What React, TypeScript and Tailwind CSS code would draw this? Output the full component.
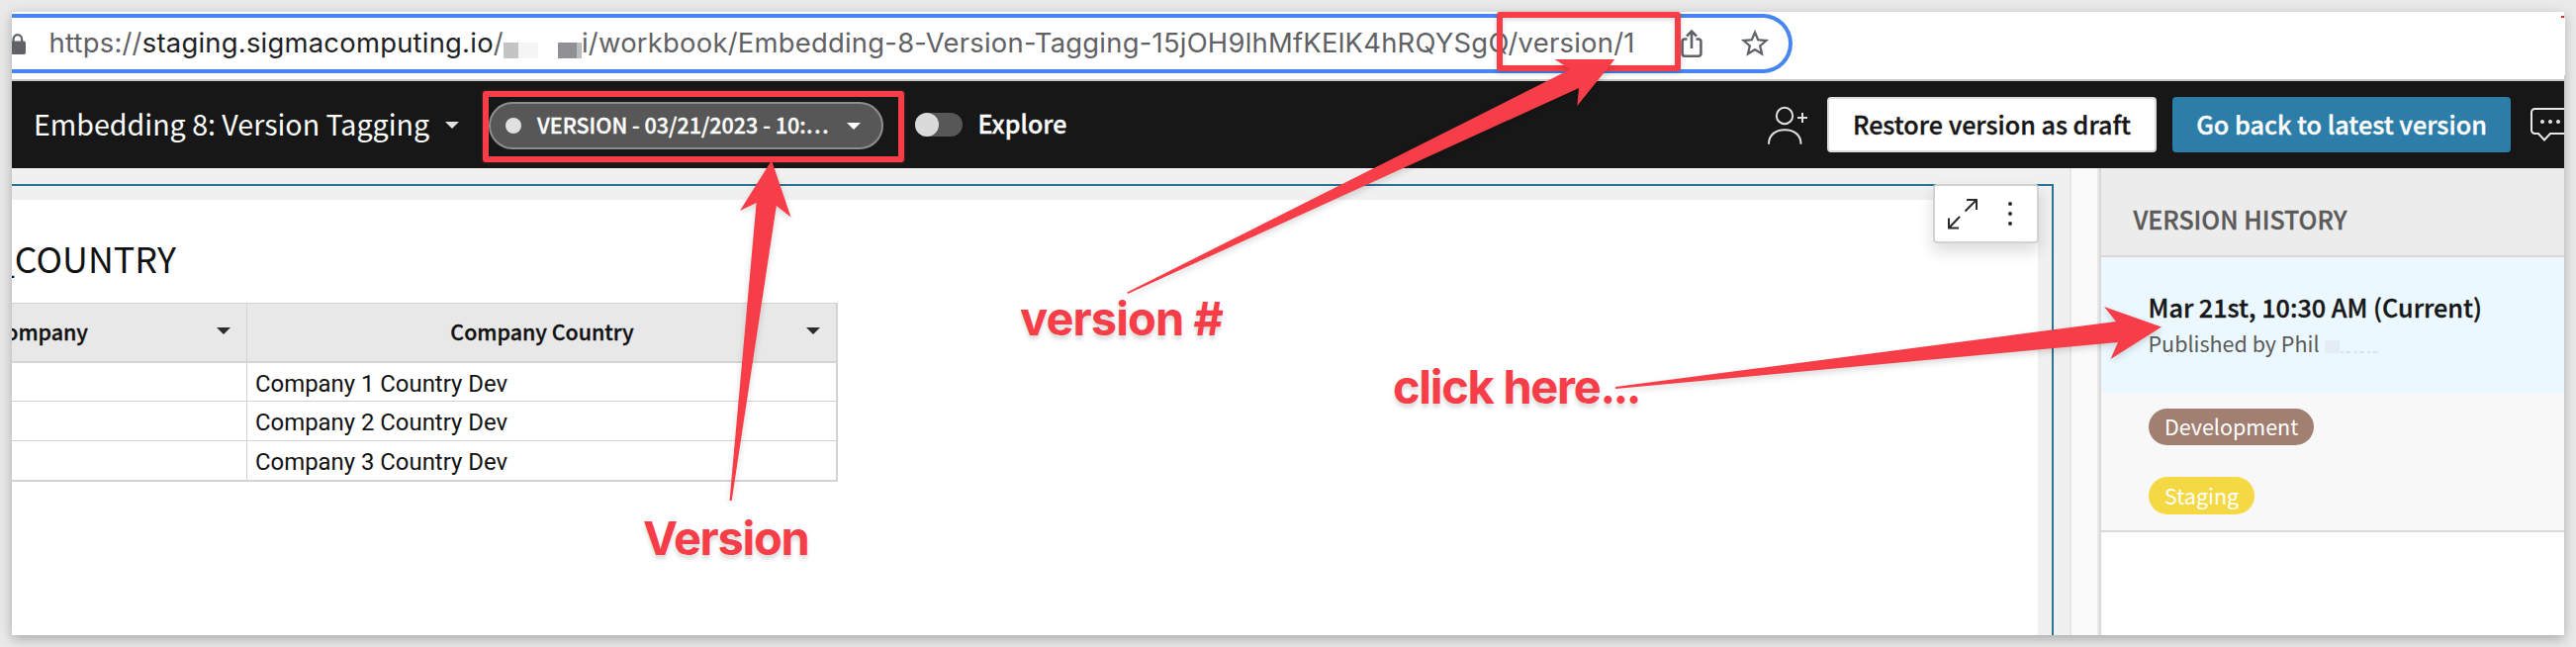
import type { ReactNode } from "react";

const sans = "font-['Noto_Sans_CJK_SC',sans-serif]";
const semibold = "font-medium [-webkit-text-stroke:0.35px_currentColor]";

function Caret({ className }: { className: string }) {
  return (
    <svg viewBox="0 0 14 7" className={`h-[7px] w-[14px] shrink-0 ${className}`} fill="currentColor">
      <path d="M0 0h14L7 7z" />
    </svg>
  );
}

function AddressBar() {
  return (
    <div className="h-[70px] border-b-2 border-[#c9cacb] bg-white pt-[2px]">
      <div className="flex h-[60px] w-[1800px] items-center rounded-r-[30px] border-4 border-l-0 border-[#4586f0] text-[27.4px] leading-none tracking-[0.24px] whitespace-nowrap text-[#5f6165] font-['Inter',sans-serif]">
        <svg viewBox="0 0 14 21" className="h-[21px] w-[14px] shrink-0">
          <path d="M1.5 9V6a4.3 4.8 0 0 1 8.6 0v3" fill="none" stroke="#5f6368" strokeWidth="2.2" />
          <path d="M0 7.5h12a2 2 0 0 1 2 2V19a2 2 0 0 1-2 2H0z" fill="#5f6368" />
        </svg>
        <div className="ml-[23.5px] w-[461px] shrink-0">
          https://<span className="text-[#202124]">staging.sigmacomputing.io</span>/
        </div>
        <div className="mt-[14px] flex h-4 w-[77.5px] shrink-0">
          <i className="ml-[-2px] w-[16.5px] bg-[#c4c4c4]" />
          <i className="w-[20px] bg-[#f5f5f5]" />
          <i className="ml-[20px] w-[20px] bg-[#8e9093]" />
          <i className="w-[5px] bg-[#bbbcbd]" />
        </div>
        <div className="w-[1111px] shrink-0">
          i/workbook/Embedding-8-Version-Tagging-15jOH9lhMfKElK4hRQYSgQ/version/1
        </div>
        <svg viewBox="0 0 22 30" className="h-[30px] w-[22px] shrink-0" fill="none" stroke="#5f6368" strokeWidth="2.6">
          <path d="M6.5 10.5H4a2.4 2.4 0 0 0-2.4 2.4v12.4A2.4 2.4 0 0 0 4 27.7h14a2.4 2.4 0 0 0 2.4-2.4V12.9a2.4 2.4 0 0 0-2.4-2.4h-2.5" />
          <path d="M11 20V3M6 7.7l5-5 5 5" />
        </svg>
        <svg viewBox="0 0 24 24" className="ml-[35.5px] size-[34px] shrink-0" fill="#5f6368">
          <path d="M22 9.24l-7.19-.62L12 2 9.19 8.63 2 9.24l5.46 4.73L5.82 21 12 17.27 18.18 21l-1.63-7.03L22 9.24zM12 15.4l-3.76 2.27 1-4.28-3.32-2.88 4.38-.38L12 6.1l1.71 4.04 4.38.38-3.32 2.88 1 4.28L12 15.4z" />
        </svg>
      </div>
    </div>
  );
}

function Header() {
  return (
    <header className="flex h-[88px] items-center bg-[#171717] whitespace-nowrap text-white">
      <div className="ml-[22px] w-[416px] shrink-0 pb-[3px] text-[28.6px] leading-[40px]">Embedding 8: Version Tagging</div>
      <Caret className="text-[#e0e0e0]" />
      <div className="mt-[2px] ml-[30px] flex h-[48px] w-[398.5px] shrink-0 items-center rounded-full border-2 border-[#8e8e8e] bg-[#575757]">
        <span className="ml-[15px] size-4 shrink-0 rounded-full bg-[#e0e0e0]" />
        <span className={`ml-4 w-[313px] shrink-0 pb-[3px] text-[21.5px] leading-[30px] ${semibold}`}>VERSION - 03/21/2023 - 10:…</span>
        <Caret className="text-white" />
      </div>
      <div className="ml-[32.5px] flex h-6 w-12 shrink-0 rounded-full bg-[#575757]">
        <span className="size-6 rounded-full bg-[#dadada]" />
      </div>
      <div className={`ml-[15.5px] shrink-0 pb-[4px] text-[25px] leading-[36px] ${semibold}`}>Explore</div>
      <div className="flex flex-1 items-center justify-end">
        <svg viewBox="0 0 42 40" className="mr-[19px] h-[40px] w-[42px] shrink-0" fill="none" stroke="#e0e0e0" strokeWidth="2">
          <circle cx="18" cy="11" r="8.2" />
          <path d="M2 39.700C2 30 9 25.300 18.200 25.300S34.500 30 34.500 39.700" />
          <path d="M36 8v10M31 13h10" />
        </svg>
        <button className={`h-[56px] w-[333px] rounded-[4px] border-2 border-[#dcdcdc] bg-white pb-[2px] text-[25.1px] leading-[36px] text-[#171717] ${semibold}`}>
          Restore version as draft
        </button>
        <button className={`ml-4 h-[56px] w-[342px] rounded-[4px] bg-[#2d7da9] pb-[2px] text-[25.2px] leading-[36px] text-white ${semibold}`}>
          Go back to latest version
        </button>
        <svg viewBox="0 0 34 36" className="ml-[20px] h-[36px] w-[34px] shrink-0" fill="none" stroke="#e8e8e8" strokeWidth="2">
          <path d="M36 2H4.500A3.500 3.500 0 0 0 1 5.500v18A3.500 3.500 0 0 0 4.500 27H8l6 6.500 6-6.500h16" />
          <g fill="#e8e8e8" stroke="none">
            <circle cx="12" cy="15" r="2" />
            <circle cx="20" cy="15" r="2" />
            <circle cx="28" cy="15" r="2" />
          </g>
        </svg>
      </div>
    </header>
  );
}

const rows = ["Company 1 Country Dev", "Company 2 Country Dev", "Company 3 Country Dev"];

function DataTable() {
  return (
    <div className="w-[835px] border-t border-r-2 border-b-2 border-[#d4d4d4]">
      <div className={`flex h-[60px] border-b-2 border-[#d4d4d4] bg-[#e8e8e8] text-[21.4px] leading-[30px] text-[#111] ${semibold}`}>
        <div className="flex w-[238px] shrink-0 items-center border-r border-[#d4d4d4] pb-[3px]">
          <div className="flex w-[77px] shrink-0 justify-end overflow-hidden">Company</div>
          <Caret className="ml-[130px] text-[#2b2b2b]" />
        </div>
        <div className="flex flex-1 items-center pb-[3px]">
          <div className="flex-1 pl-[187px] text-center">Company Country</div>
          <Caret className="mr-[16px] ml-[156px] text-[#2b2b2b]" />
        </div>
      </div>
      <div className="grid grid-rows-[39px_40px_39px] divide-y divide-[#d4d4d4]">
        {rows.map((row) => (
          <div key={row} className="flex">
            <div className="w-[238px] shrink-0 border-r border-[#d4d4d4]" />
            <div className="pt-[4px] pl-[8px] text-[23.9px] leading-[34px] text-[#111] font-['Roboto',sans-serif]">{row}</div>
          </div>
        ))}
      </div>
    </div>
  );
}

function Toolbar() {
  return (
    <div className="absolute -top-[2px] left-[1942px] flex h-[60px] w-[107px] items-center rounded-[4px] border-2 border-[#d2d2d2] bg-white shadow-[0_8px_16px_rgba(0,0,0,0.14)]">
      <svg viewBox="0 0 32 32" className="ml-[12px] size-8 shrink-0" fill="none" stroke="#2b2b2b" strokeWidth="2">
        <path d="M20 2h10v10M30 2 18.5 13.5" />
        <path d="M12 30.5H2v-10M2 30.5 13 19" />
      </svg>
      <svg viewBox="0 0 4 24" className="ml-[30px] h-6 w-1" fill="#2b2b2b">
        <circle cx="2" cy="2" r="2" />
        <circle cx="2" cy="12" r="2" />
        <circle cx="2" cy="22" r="2" />
      </svg>
    </div>
  );
}

function Canvas() {
  return (
    <main className="w-[2082px] shrink-0 border-r-2 border-[#e6e6e6] bg-[#f0f0f0] pt-4">
      <div className="relative h-[456px] w-[2064px] border-t-2 border-r-2 border-[#2a7496] pt-[14px]">
        <div className="h-full w-[2048px] bg-white pt-[32px]">
          <div className="mb-5 flex h-[52px] w-[166px] justify-end overflow-hidden text-[35.8px] leading-[52px] text-[#111]">_COUNTRY</div>
          <DataTable />
        </div>
        <Toolbar />
      </div>
    </main>
  );
}

function Tag({ className, children }: { className: string; children: ReactNode }) {
  return (
    <span className={`flex items-center rounded-full px-4 pb-px text-[21.5px] leading-[30px] text-white ${className}`}>{children}</span>
  );
}

function VersionHistory() {
  return (
    <aside className="flex-1 border-l-2 border-[#d9d9d9] bg-white">
      <div className={`h-[90px] border-b-2 border-[#d9d9d9] bg-[#ececec] pt-[33px] pl-[32.5px] text-[25px] leading-[36px] text-[#5a5a5a] ${semibold}`}>
        VERSION HISTORY
      </div>
      <div className="h-[137px] bg-[#ecf8ff] pt-[32px] pl-[47.5px] whitespace-nowrap">
        <div className={`text-[25.2px] leading-[36px] text-[#171717] ${semibold}`}>Mar 21st, 10:30 AM (Current)</div>
        <div className="mt-[3.5px] flex text-[21.5px] leading-[30px] text-[#5a5a5a]">
          Published by Phil
          <span className="mt-[12px] ml-[5px] h-[13px] w-[15px] bg-[#e4ecf4]" />
          <svg viewBox="0 0 40 4" className="mt-[22px] h-1 w-10" stroke="#cfdae2" strokeWidth="1.5" strokeDasharray="3 2.5 5 3">
            <path d="M1 2h38" />
          </svg>
        </div>
      </div>
      <div className="flex h-[141px] flex-col items-start gap-[32px] border-b-2 border-[#d9d9d9] bg-[#f8f8f8] pt-4 pl-[48px]">
        <Tag className="h-[37px] bg-[#a18072]">Development</Tag>
        <Tag className="h-[38px] bg-[#f5d944]">Staging</Tag>
      </div>
    </aside>
  );
}

function Annotations() {
  return (
    <div className="pointer-events-none absolute inset-0 whitespace-nowrap text-[#f73d48] font-['Inter',sans-serif]">
      <div className="absolute top-[92px] left-[488px] h-[72px] w-[426px] rounded-[3px] border-6 border-[#f73d48] shadow-[0_0_2px_rgba(247,61,72,0.6)]" />
      <div className="absolute top-[12px] left-[1513px] h-[60px] w-[186px] rounded-[3px] border-6 border-[#f73d48] shadow-[0_2px_5px_rgba(0,0,0,0.2),inset_0_2px_5px_rgba(0,0,0,0.15)]" />
      <svg viewBox="0 0 2604 654" className="absolute inset-0 h-[654px] w-[2604px] drop-shadow-[0_3px_3px_rgba(0,0,0,0.15)]" fill="#f73d48">
        <path d="M780 162 799.500 219.500 784.800 208 739.700 506H737.500L764.600 205 748 213z" />
        <path d="M1632.300 60 1594.300 107 1596 89 1140 297 1139.300 295.500 1587.500 70 1571.500 60z" />
        <path d="M2185 330.500 2133.500 363 2141 346 1633 393V391L2139 325 2127 310z" />
      </svg>
      <div className="absolute top-[514px] left-[650px] text-[47px] leading-[60px] font-bold tracking-[-1.3px] text-shadow-[0_4px_4px_rgba(0,0,0,0.15)]">Version</div>
      <div className="absolute top-[292px] left-[1031px] text-[47px] leading-[60px] font-bold tracking-[-0.9px] text-shadow-[0_4px_4px_rgba(0,0,0,0.15)]">version #</div>
      <div className="absolute top-[361px] left-[1408px] text-[47px] leading-[60px] font-bold tracking-[-1.3px] text-shadow-[0_4px_4px_rgba(0,0,0,0.15)]">
        click here<span className="tracking-[-2.6px]">...</span>
      </div>
    </div>
  );
}

export default function App() {
  return (
    <div className={`relative h-[654px] w-[2604px] overflow-hidden bg-[#eaeaea] p-3 ${sans}`}>
      <div className="h-[630px] w-[2580px] shadow-[0_4px_12px_rgba(0,0,0,0.28)]">
        <div className="h-full w-full overflow-hidden bg-white">
          <AddressBar />
          <Header />
          <div className="flex h-[472px]">
            <Canvas />
            <div className="w-[28px] shrink-0 border-r-2 border-[#e8e8e8] bg-[#fafafa]" />
            <VersionHistory />
          </div>
        </div>
      </div>
      <div className="absolute top-[18px] left-[2592px] h-[58px] w-px bg-white" />
      <div className="absolute top-[16px] left-[2589px] h-[2px] w-[3px] bg-[#c9302c]" />
      <Annotations />
    </div>
  );
}
